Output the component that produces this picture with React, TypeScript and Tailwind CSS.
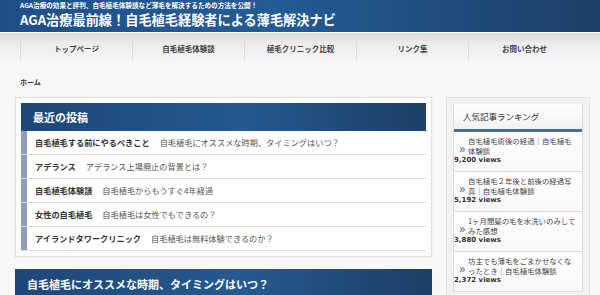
import React from "react";

const jp = { fontFamily: '"Noto Sans CJK JP", "Noto Sans", sans-serif' };

const navItems = ["トップページ", "自毛植毛体験談", "植毛クリニック比較", "リンク集", "お問い合わせ"];

const posts = [
  ["自毛植毛する前にやるべきこと", "自毛植毛にオススメな時期、タイミングはいつ？"],
  ["アデランス", "アデランス上場廃止の背景とは？"],
  ["自毛植毛体験談", "自毛植毛からもうすぐ4年経過"],
  ["女性の自毛植毛", "自毛植毛は女性でもできるの？"],
  ["アイランドタワークリニック", "自毛植毛は無料体験できるのか？"],
];

const ranking = [
  ["自毛植毛術後の経過｜自毛植毛", "体験談", "9,200 views"],
  ["自毛植毛２年後と前後の経過写", "真｜自毛植毛体験談", "5,192 views"],
  ["1ヶ月間髪の毛を水洗いのみして", "みた感想", "3,880 views"],
  ["坊主でも薄毛をごまかせなくな", "ったとき｜自毛植毛体験談", "2,372 views"],
];

export default function App() {
  return (
    <div className="w-[600px] h-[295px] overflow-hidden bg-[#f7f7f7]" style={jp}>
      <header className="h-[32px] bg-[linear-gradient(to_right,#1f4f87_0%,#245c95_45%,#1b4068_100%)] pl-[20px] text-white">
        <div className="pt-[1px] text-[6.6px] leading-[9px] font-bold">
          AGA治療の効果と評判、自毛植毛体験談など薄毛を解決するための方法を公開！
        </div>
        <div className="text-[13.2px] leading-[18px] font-bold mt-[1px]">
          AGA治療最前線！自毛植毛経験者による薄毛解決ナビ
        </div>
      </header>
      <div className="h-[1px] bg-white" />
      <nav className="h-[30px] bg-[linear-gradient(to_bottom,#dadada_0%,#ececec_35%,#f7f7f7_100%)] pl-[20px] pt-[6px]">
        <div className="flex h-[22px]">
          {navItems.map((n) => (
            <div
              key={n}
              className="w-[112px] border-l border-[#dcdcdc] flex items-center justify-center text-[7.5px] font-bold text-[#444] pb-[2px]"
            >
              {n}
            </div>
          ))}
        </div>
      </nav>
      <div className="pl-[20px] mt-[14px] text-[7px] leading-[10px] font-bold text-[#333]">ホーム</div>
      <div className="flex pl-[15px] gap-[14px] mt-[10px]">
        <div className="w-[417px] flex flex-col">
          <div className="border border-[#e2e2e2] bg-[#fbfbfb] p-[5px] shadow-[0_0_2px_rgba(0,0,0,0.08)]">
            <div className="h-[28px] bg-[linear-gradient(to_right,#1d4777_0%,#25598f_55%,#1b3f67_100%)] pl-[12px] flex items-center text-white text-[11px] font-bold">
              最近の投稿
            </div>
            {posts.map(([t, d]) => (
              <div key={t} className="h-[24px] flex border-b border-[#e0e0e0] bg-white">
                <div className="w-[6px] bg-[#8d9fb7]" />
                <div className="flex items-center pl-[8px] text-[8.2px]">
                  <span className="font-bold text-[#333]">{t}</span>
                  <span className="ml-[10px] text-[#555]">{d}</span>
                </div>
              </div>
            ))}
          </div>
          <div className="mt-[12px] h-[30px] bg-[linear-gradient(to_right,#1d4777_0%,#25598f_55%,#1b3f67_100%)] pl-[12px] flex items-center text-white text-[11px] font-bold">
            自毛植毛にオススメな時期、タイミングはいつ？
          </div>
        </div>
        <div className="w-[144px] h-[220px] border border-[#e2e2e2] bg-[#f2f2f2] p-[6px]">
          <div className="bg-white border-x border-[#dcdcdc]">
            <div className="h-[25px] rounded-t-[3px] bg-[linear-gradient(to_bottom,#ffffff,#f1f1f1)] pl-[9px] flex items-center text-[8.5px] text-[#333]">
              人気記事ランキング
            </div>
            <div className="h-[3px] bg-[#3f6e9f]" />
            {ranking.map(([a, b, v]) => (
              <div key={v} className="border-b border-[#dcdcdc] pt-[4px] pb-[6px] bg-[linear-gradient(to_bottom,#ffffff,#f8f8f8)]">
                <div className="flex items-center">
                  <span className="w-[14px] pl-[5px] text-[12px] leading-[10px] text-[#4a7fc2] font-bold pt-[4px]">»</span>
                  <div className="text-[7.4px] leading-[10px] text-[#444]">
                    <div>{a}</div>
                    <div>{b}</div>
                  </div>
                </div>
                <div className="text-[7px] leading-[9px] font-bold text-[#333]" style={{ fontFamily: '"DejaVu Sans", sans-serif' }}>
                  {v}
                </div>
              </div>
            ))}
          </div>
        </div>
      </div>
    </div>
  );
}
